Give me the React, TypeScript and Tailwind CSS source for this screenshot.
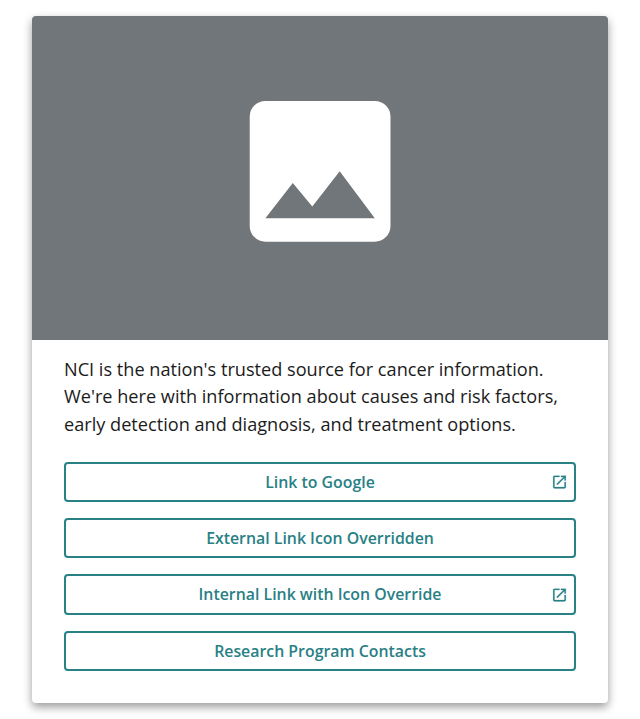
const buttons = [
  { label: "Link to Google", icon: true, size: "h-10 pt-px" },
  { label: "External Link Icon Overridden", icon: false, size: "h-10 pt-px" },
  { label: "Internal Link with Icon Override", icon: true, size: "h-[41px]" },
  { label: "Research Program Contacts", icon: false, size: "h-10 pt-px" },
];

function ExternalIcon() {
  return (
    <svg viewBox="0 0 24 24" className="absolute right-[6px] top-1/2 size-[17px] -translate-y-1/2" fill="currentColor" stroke="currentColor" strokeWidth="0.3">
      <path d="M19 19H5V5h7V3H5a2 2 0 0 0-2 2v14a2 2 0 0 0 2 2h14c1.1 0 2-.9 2-2v-7h-2v7zM14 3v2h3.59l-9.83 9.83 1.41 1.41L19 6.41V10h2V3h-7z" />
    </svg>
  );
}

export default function App() {
  return (
    <div className="h-[719px] bg-white px-8 pt-4 font-['Open_Sans',sans-serif]">
      <article className="h-[687px] overflow-hidden rounded bg-white shadow-[0_4px_10px_rgba(0,0,0,0.4)]">
        <div className="h-[324px] bg-[#71767a]">
          <svg viewBox="0 0 576 324" className="size-full">
            <path transform="translate(0 0.2)" fill="#fff" d="M358.500 209.500v-109a15.700 15.700 0 0 0-15.700-15.700h-109.400a15.700 15.700 0 0 0-15.700 15.700v109.300a15.700 15.700 0 0 0 15.700 15.700h109.400a15.700 15.700 0 0 0 15.700-15.700zM260.800 166.700l19.500 23.500 27.400-35.200 35.100 47h-109.400z" />
          </svg>
        </div>
        <div className="px-8 pt-4">
          <p className="h-[82px] whitespace-nowrap text-[18.150px] leading-[27.400px] text-[#1b1b1b]">
            NCI is the nation's trusted source for cancer information.<br />
            We're here with information about causes and risk factors,<br />
            early detection and diagnosis, and treatment options.
          </p>
          <div className="mt-6 flex flex-col gap-4">
            {buttons.map((b) => (
              <a key={b.label} className={`relative flex items-center justify-center rounded border-2 border-[#298085] text-[15.860px] font-semibold leading-none text-[#298085] ${b.size}`}>
                {b.label}
                {b.icon && <ExternalIcon />}
              </a>
            ))}
          </div>
        </div>
      </article>
    </div>
  );
}
